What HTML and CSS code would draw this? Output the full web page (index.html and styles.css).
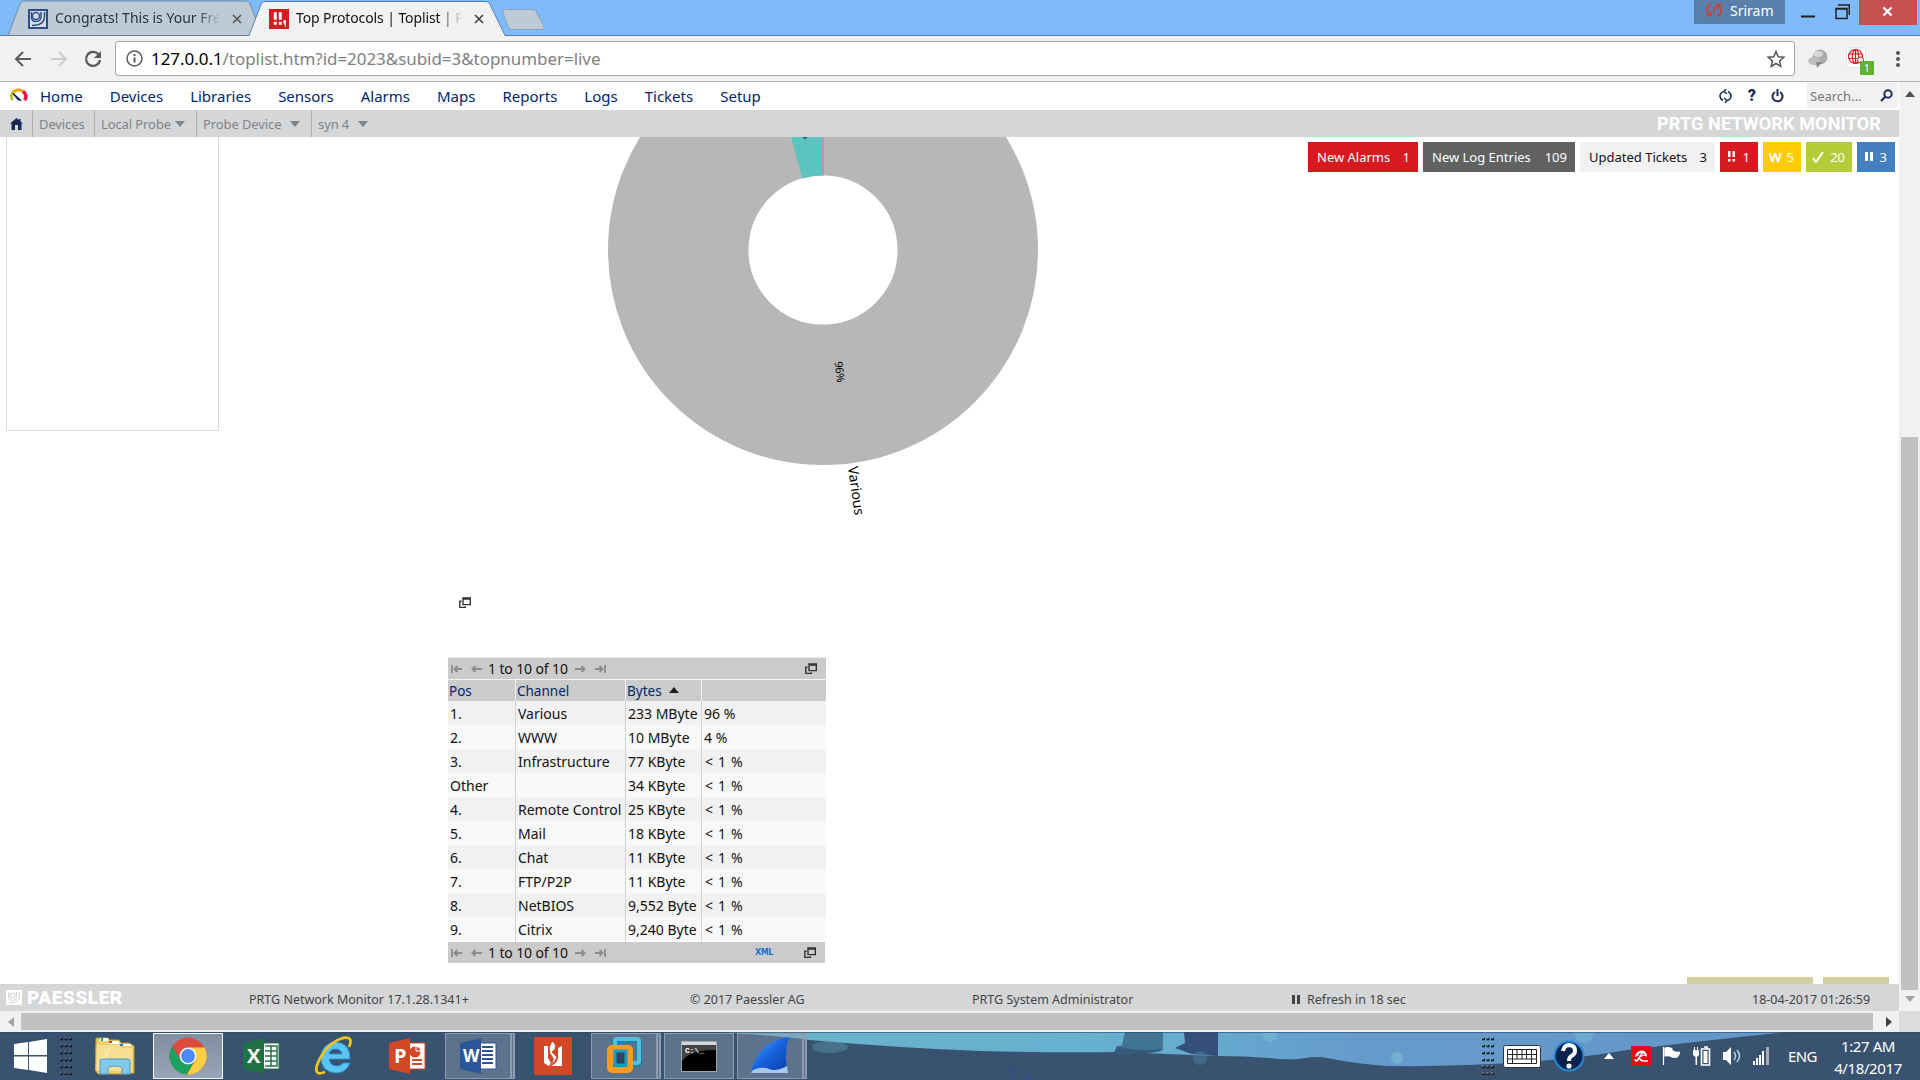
FILE: index.html
```html
<!DOCTYPE html>
<html lang="en">
<head>
<meta charset="utf-8">
<title>Top Protocols | Toplist | PRTG</title>
<link rel="stylesheet" href="styles.css">
</head>
<body>
<svg class="defs" width="0" height="0">
  <symbol id="popup" viewBox="0 0 12 12"><path d="M4 1h7.300v6.600H4zM4 2h7.300M2.600 4.200H.8v6.200h5.600V9.200" fill="none" stroke="#333" stroke-width="1.400"/></symbol>
  <symbol id="prev" viewBox="0 0 11 8"><path d="M11 4H2M4.500 1 1.500 4l3 3" fill="none" stroke="#8c8c8c" stroke-width="2"/></symbol>
  <symbol id="first" viewBox="0 0 11 8"><path d="M1 0v8M11 4H4M6.500 1 3.500 4l3 3" fill="none" stroke="#8c8c8c" stroke-width="1.800"/></symbol>
</svg>
<div class="screen">
  <header class="tabs">
    <svg class="tab-shapes" width="560" height="36">
      <path d="M8 35.500 20 4q1-3 4-3h222q3 0 4 3l8 20-7 11.500z" fill="#becbd6" stroke="#6f8ba6"/>
      <path d="M512 29.500q-3 0-4-3l-5-14q-1-3 2-3h27q3 0 4 2l8 15q1 3-2 3z" fill="#becbd6" stroke="#8ba3b9"/>
      <path d="M0 35.500h249l12-31q1-3 4-3h221q3 0 4 3l15 31h55V37H0z" fill="#f1f1f1" stroke="#587fa7"/>
    </svg>
    <div class="tab tab-one">
      <svg width="20" height="20" viewBox="0 0 20 20"><path d="M1 1h18v18H1z" fill="#d5dde8" stroke="#2d4f86" stroke-width="2"/><circle cx="8" cy="7" r="3.500" fill="none" stroke="#2d4f86" stroke-width="1.500"/><path d="M3.500 3v5q0 4.500 4.500 4.500T13 8V3M16.500 3v4q0 9.500-12.500 9.500" fill="none" stroke="#2d4f86" stroke-width="1.500"/></svg>
      <span class="tab-title">Congrats! This is Your Free</span>
      <svg width="10" height="10"><path d="m1 1 8 8m0-8-8 8" stroke="#555" stroke-width="1.600"/></svg>
    </div>
    <div class="tab tab-two">
      <svg width="20" height="20"><path d="M0 0h20v20H0z" fill="#d71920"/><path d="M5 3.500h2.500v7H5zm5 0h2.500v7H10zM5 13h2.500v2.500H5zm5 0h2.500v2.500H10zm4-.5 2.500-1.500v7" fill="#fff" stroke="#fff" stroke-width=".5"/></svg>
      <span class="tab-title">Top Protocols | Toplist | PRTG</span>
      <svg width="10" height="10"><path d="m1 1 8 8m0-8-8 8" stroke="#444" stroke-width="1.700"/></svg>
    </div>
    <div class="window-tools">
      <div class="user"><svg width="16" height="15"><path d="M5 1Q1 3 1 7q0 3 3 5.500M0 12.500h5V8M11 13.500q4-2 4-6 0-3-3-5.500M16 1.500h-5V6M8 3v5m0 1.500v2" fill="none" stroke="#d63a30" stroke-width="1.700"/></svg><span>Sriram</span></div>
      <svg class="minimise" width="14" height="24"><path d="M0 16.500h14" stroke="#222" stroke-width="2"/></svg>
      <svg class="restore" width="15" height="24"><path d="M3 5h11.300v10M1 8.500h11v10H1zM1 9h11" fill="none" stroke="#222" stroke-width="1.500"/></svg>
      <div class="close"><svg width="11" height="11"><path d="m1.500 1.500 8 8m0-8-8 8" stroke="#fff" stroke-width="2.200"/></svg></div>
    </div>
  </header>
  <div class="toolbar">
    <svg class="back" width="18" height="18"><path d="M17 9H2M9 2 2 9l7 7" fill="none" stroke="#5a5a5a" stroke-width="2"/></svg>
    <svg class="forward" width="18" height="18"><path d="M1 9h15M9 2l7 7-7 7" fill="none" stroke="#ccc" stroke-width="2"/></svg>
    <svg class="reload" width="18" height="18"><path d="M14.500 4.500A7 7 0 1 0 16 10" fill="none" stroke="#5a5a5a" stroke-width="2.200"/><path d="M17 1v7h-7z" fill="#5a5a5a"/></svg>
    <div class="address">
      <svg width="17" height="17"><circle cx="8.500" cy="8.500" r="7.500" fill="none" stroke="#5a5a5a" stroke-width="1.500"/><path d="M8.500 7.500v5M8.500 4v2" stroke="#5a5a5a" stroke-width="2"/></svg>
      <p class="url"><b>127.0.0.1</b>/toplist.htm?id=2023&amp;subid=3&amp;topnumber=live</p>
      <svg width="18" height="18" viewBox="0 0 18 18"><path d="m9 1.500 2.200 5.300 5.600.4-4.300 3.700 1.300 5.500L9 13.500l-4.800 2.900 1.300-5.500L1.200 7.200l5.600-.4z" fill="none" stroke="#555" stroke-width="1.500"/></svg>
    </div>
    <svg class="ext-one" width="20" height="20"><circle cx="12" cy="8" r="7.500" fill="#aaa"/><ellipse cx="6" cy="12" rx="6" ry="4" fill="#bdbdbd"/><path d="m8 13 1 6 5-6z" fill="#858585"/><ellipse cx="10" cy="5" rx="5" ry="3" fill="#d7d7d7"/></svg>
    <svg class="ext-two" width="28" height="28"><path d="M.5.500h19v20H.5z" fill="#fff" stroke="#e2e2e2"/><g fill="none" stroke="#d71920" stroke-width="1.200"><circle cx="9.500" cy="9.500" r="7"/><ellipse cx="9.500" cy="9.500" rx="3.200" ry="7"/><path d="M3 7h13M3 11.500h8M9.500 2.500V16"/></g><circle cx="14.500" cy="13" r="3" fill="#fff" stroke="#d71920"/><path d="M14 14h14v14H14z" fill="#5fb42d"/><text x="18" y="25" class="badge-number">1</text></svg>
    <svg class="kebab" width="6" height="18"><g fill="#555"><circle cx="3" cy="3" r="2"/><circle cx="3" cy="9" r="2"/><circle cx="3" cy="15" r="2"/></g></svg>
  </div>
  <main class="viewport">
    <div class="page">
      <nav class="menu">
        <svg width="19" height="15" viewBox="0 0 19 15"><g fill="none" stroke-width="3"><path d="M3.500 12A7 7 0 0 1 3 5.800" stroke="#b5cb35"/><path d="M3 6A7 6.500 0 0 1 14 3.500" stroke="#f7a600"/><path d="M14 3.500a7 6 0 0 1 1.500 8.500" stroke="#e5104c" stroke-width="3.600"/></g><path d="m4 5.500 8 7-3-1z" fill="#0b2265" stroke="#0b2265" stroke-width="1.200"/></svg>
        <a>Home</a><a>Devices</a><a>Libraries</a><a>Sensors</a><a>Alarms</a><a>Maps</a><a>Reports</a><a>Logs</a><a>Tickets</a><a>Setup</a>
        <div class="menu-tools">
          <svg width="13" height="14"><path d="M5 2.500Q1 3.500 1 7q0 3 3 4.500M8 11.500q4-1 4-4.500 0-3-3-4.500M7 0 5 2.500 8 5M5 9l3 2.500L6 14" fill="none" stroke="#1d2c57" stroke-width="1.500"/></svg>
          <b>?</b>
          <svg width="13" height="14"><path d="M4 3a5 5 0 1 0 5 0M6.500 0v7" fill="none" stroke="#1d2c57" stroke-width="2"/></svg>
          <div class="search"><span>Search...</span><svg width="13" height="13"><circle cx="8" cy="5" r="3.700" fill="none" stroke="#1d2c57" stroke-width="2"/><path d="m5.500 7.500-4.500 4.500" stroke="#1d2c57" stroke-width="2.200"/></svg></div>
        </div>
      </nav>
      <div class="crumbs">
        <span><svg width="13" height="12"><path d="M6.500 0 0 5.500h1.500V12h10V5.500H13L10.500 3.500V1H9v1z" fill="#1b2957"/><path d="M5 7h3v5H5z" fill="#d4d6d8"/></svg></span>
        <span>Devices</span>
        <span>Local Probe <i></i></span>
        <span>Probe Device <i></i></span>
        <span>syn 4 <i></i></span>
        <strong>PRTG NETWORK MONITOR</strong>
      </div>
      <section class="content">
        <aside class="side-box"></aside>
        <div class="report">
          <svg class="donut" width="480" height="400" viewBox="583 137 480 400">
            <circle cx="823" cy="250" r="144.750" fill="none" stroke="#b7b7b7" stroke-width="140.500"/>
            <path d="M823 137v38.500a74.500 74.500 0 0 0-20.700 3L791 137z" fill="#5bc4be"/>
            <path d="M823 137v38.500" stroke="#cd88b4" stroke-width="2"/>
            <text class="pct" transform="translate(834.500 362) rotate(82.300)" textLength="21">96%</text>
            <text transform="translate(848 467) rotate(82.300)" textLength="49">Various</text>
            <path d="M803 137q2 3 4 0" stroke="#111" fill="none"/>
          </svg>
          <svg class="popup-link" width="12" height="12"><use href="#popup"/></svg>
          <div class="toplist">
            <div class="pager"><svg width="11" height="8"><use href="#first"/></svg><svg width="11" height="8"><use href="#prev"/></svg><span>1 to 10 of 10</span><svg class="flip" width="11" height="8"><use href="#prev"/></svg><svg class="flip" width="11" height="8"><use href="#first"/></svg><svg class="window" width="12" height="12"><use href="#popup"/></svg></div>
            <div class="row head"><span>Pos</span><span>Channel</span><span>Bytes <i></i></span><span></span></div>
            <div class="row"><span>1.</span><span>Various</span><span>233 MByte</span><span>96 %</span></div>
            <div class="row"><span>2.</span><span>WWW</span><span>10 MByte</span><span>4 %</span></div>
            <div class="row"><span>3.</span><span>Infrastructure</span><span>77 KByte</span><span class="less">&lt; 1 %</span></div>
            <div class="row"><span>Other</span><span></span><span>34 KByte</span><span class="less">&lt; 1 %</span></div>
            <div class="row"><span>4.</span><span>Remote Control</span><span>25 KByte</span><span class="less">&lt; 1 %</span></div>
            <div class="row"><span>5.</span><span>Mail</span><span>18 KByte</span><span class="less">&lt; 1 %</span></div>
            <div class="row"><span>6.</span><span>Chat</span><span>11 KByte</span><span class="less">&lt; 1 %</span></div>
            <div class="row"><span>7.</span><span>FTP/P2P</span><span>11 KByte</span><span class="less">&lt; 1 %</span></div>
            <div class="row"><span>8.</span><span>NetBIOS</span><span>9,552 Byte</span><span class="less">&lt; 1 %</span></div>
            <div class="row"><span>9.</span><span>Citrix</span><span>9,240 Byte</span><span class="less">&lt; 1 %</span></div>
            <div class="pager bottom"><svg width="11" height="8"><use href="#first"/></svg><svg width="11" height="8"><use href="#prev"/></svg><span>1 to 10 of 10</span><svg class="flip" width="11" height="8"><use href="#prev"/></svg><svg class="flip" width="11" height="8"><use href="#first"/></svg><em>XML</em><svg class="window" width="12" height="12"><use href="#popup"/></svg></div>
          </div>
        </div>
        <div class="status">
          <div class="alarms"><span>New Alarms</span><span>1</span></div>
          <div class="log"><span>New Log Entries</span><span>109</span></div>
          <div class="tickets"><span>Updated Tickets</span><span>3</span></div>
          <div class="down"><svg width="9" height="11"><path d="M1 0h2.500v6H1zm4.500 0H8v6H5.500zM1 8h2.500v2.500H1zm4.500 0H8v2.500H5.500z" fill="#fff"/></svg><span>1</span></div>
          <div class="warn"><b>W</b><span>5</span></div>
          <div class="up"><svg width="12" height="12"><path d="m1 7 3 4 7-10" fill="none" stroke="#fff" stroke-width="2"/></svg><span>20</span></div>
          <div class="paused"><svg width="8" height="9"><path d="M0 0h3v9H0zm5 0h3v9H5z" fill="#fff"/></svg><span>3</span></div>
        </div>
        <div class="hidden-buttons"><span></span><span></span></div>
      </section>
      <footer class="footer">
        <span class="brand"><svg width="16" height="15"><path d="M0 0h16v15H0z" fill="#fff"/><circle cx="6.500" cy="5.500" r="2.500" fill="none" stroke="#d4d6d8" stroke-width="1.200"/><path d="M2.500 2v4q0 4.500 4 4.500t4-4.500V2M13.500 2v4q0 7-10 7" fill="none" stroke="#d4d6d8"/></svg><strong>PAESSLER</strong></span>
        <span>PRTG Network Monitor 17.1.28.1341+</span>
        <span>© 2017 Paessler AG</span>
        <span>PRTG System Administrator</span>
        <span class="refresh"><svg width="8" height="9"><path d="M0 0h3v9H0zm5 0h3v9H5z" fill="#444"/></svg>Refresh in 18 sec</span>
        <span>18-04-2017 01:26:59</span>
      </footer>
    </div>
    <div class="scroll-y">
      <svg width="10" height="6"><path d="M5 0 10 6H0z" fill="#505050"/></svg>
      <div class="thumb"></div>
      <svg width="10" height="6"><path d="M5 6 10 0H0z" fill="#a3a3a3"/></svg>
    </div>
  </main>
  <div class="scroll-x">
    <svg width="6" height="10"><path d="M0 5 6 0v10z" fill="#a3a3a3"/></svg>
    <div class="thumb"></div>
    <svg width="6" height="10"><path d="M6 5 0 0v10z" fill="#404040"/></svg>
    <div class="corner"></div>
  </div>
  <footer class="taskbar">
    <svg class="wallpaper" width="1920" height="48" viewBox="0 0 1920 48">
      <defs>
        <linearGradient id="sky"><stop offset="0" stop-color="#6ab3cb"/><stop offset=".4" stop-color="#67afd0"/><stop offset=".6" stop-color="#659bcb"/><stop offset="1" stop-color="#6496c8"/></linearGradient>
      </defs>
      <path d="M0 0h1920v48H0z" fill="#38526f"/>
      <path d="M720 0q60 4 90 8 90 8 170 11 80 2 140 1l97 4q33 0 63 3 16 1 25-1 12-2 22 0 30 6 60 8 70 1 140-4 60-5 100-12 80-10 160-18z" fill="url(#sky)"/>
      <path d="M1125 0h38v18q-18 5-49 3 2-6 8-8z" fill="#417393"/>
      <path d="M1117 14q20 6 44 3v2q-18 4-47 2z" fill="#355a7c"/>
      <path d="M1184 0h34v24l-26-2-17-6 10-5z" fill="#354f7b"/>
      <circle cx="1397" cy="26" r="6" fill="#76b5d0" opacity=".8"/><circle cx="1584" cy="1" r="10" fill="#79c5d8" opacity=".4"/><circle cx="1270" cy="3" r="7" fill="#7cc2d9" opacity=".5"/><circle cx="1200" cy="26" r="7" fill="#4c7fa0" opacity=".5"/><ellipse cx="830" cy="15" rx="18" ry="6" fill="#67b0bf" opacity=".35"/>
      <path d="m1008 35 7-2 1 15h-5zm20 7 7 6h-12z" fill="#384d83" opacity=".6"/>
      <path d="M0 .5h1920" stroke="#2b4967" opacity=".6"/>
    </svg>
    <div class="apps">
      <svg class="start" width="33" height="34"><path d="M0 5 14 3v13H0zm15-2L33 0v16H15zM0 17.500h14V31L0 29zm15 0h18V34l-18-3z" fill="#fff"/></svg>
      <svg class="dots" width="12" height="38"><path d="M0 2h12M0 9h12M0 16h12M0 23h12M0 30h12M0 37h12" stroke="#101820" stroke-width="2.500" stroke-dasharray="3 1.500"/><path d="M0 1h12M0 8h12M0 15h12M0 22h12M0 29h12M0 36h12" stroke="#75889b" stroke-dasharray="2 2.500"/></svg>
      <div class="app"><svg width="40" height="40"><path d="M1 2h12l2 2h9l2 3h8l5 3v27L33 38H3L0 34z" fill="#ead06f" stroke="#b89a3c"/><path d="M5 2h8v3H5zm9 3h10v3H14zm11 3h11v2H25z" fill="#fff"/><path d="M6 2h2v3H6z" fill="#28a34a"/><path d="M14 5h3v2h-3z" fill="#e13a20"/><path d="M25 8h3v2h-3z" fill="#2578c8"/><path d="M2 9h22l3 3h10v23H2z" fill="#f6df91"/><path d="M1 30 17 7 8 33z" fill="#fff3c0" opacity=".5"/><path d="M5 38V24q0-1 2-1h26q2 0 2 2v13h-8v-5q0-3-7-3t-7 3v5z" fill="#83c9e8" stroke="#4a9bc7"/></svg></div>
      <div class="app active"><svg width="38" height="38" viewBox="0 0 38 38"><circle cx="19" cy="19" r="18.500" fill="#de4b3d"/><path d="M3 9.700A18.500 18.500 0 0 0 18 37.500L26 23l-14 0z" fill="#1da15f"/><path d="M19 10.500h16.500A18.500 18.500 0 0 1 18 37.500L26.500 23z" fill="#ffce42"/><circle cx="19" cy="19" r="8.500" fill="#f4f4f4"/><circle cx="19" cy="19" r="6.900" fill="#4c8bf5"/></svg></div>
      <div class="app"><svg width="37" height="36"><path d="M20 5h16v26H20z" fill="#fff" stroke="#217346"/><path d="M22 8h12v20H22M22 13h12M22 18h12M22 23h12M28 8v20" fill="none" stroke="#217346" stroke-width="1.500"/><path d="m0 5 21-5v36L0 31z" fill="#1f7245"/><text x="4" y="25">X</text></svg></div>
      <div class="app"><svg width="40" height="40"><path d="M36 23H15q1 7 8 7 4 0 6-3h7q-4 10-14 10Q7 36 7 21 8 7 22 6q14 1 14 17zm-8-5q-1-5-6.500-5T15 18z" fill="#5bc5f2" stroke="#2f94cf"/><path d="M35 11q5-11-6-9Q17 5 8 19-1 34 4 37q2 1 7-1" fill="none" stroke="#f2c41d" stroke-width="2.800"/></svg></div>
      <div class="app"><svg width="37" height="36"><path d="M20 5h16v26H20z" fill="#fff" stroke="#d24726"/><path d="M23 22h10M23 26h10" stroke="#d24726" stroke-width="2"/><circle cx="26" cy="14" r="5.500" fill="#d24726"/><path d="M27 8v5h6" fill="none" stroke="#fff"/><path d="m0 5 21-5v36L0 31z" fill="#d24726"/><text x="5" y="25">P</text></svg></div>
      <div class="app open stacked"><svg width="37" height="36"><path d="M20 5h16v26H20z" fill="#fff" stroke="#2b579a"/><path d="M22 9h11M22 13h11M22 17h11M22 21h11M22 25h11" stroke="#2b579a" stroke-width="2"/><path d="m0 5 21-5v36L0 31z" fill="#2b579a"/><text class="word" x="3" y="24">W</text></svg></div>
      <div class="app"><svg width="38" height="38"><path d="M0 0h38v38H0z" fill="#d24726"/><path d="M10 9h4v12l3 5-2 3-5-3zM24 11l4-2v20H17q7-3 7-9z" fill="#fff"/><path d="m15 11 3-7q5 3 3 8-1 2-3 3l5 5q-1 5-7 8 4-5 3-7-4-4-4-10z" fill="#fff" stroke="#d24726"/></svg></div>
      <div class="app open stacked"><svg width="36" height="38"><rect x="9" y="3" width="24" height="24" rx="2" fill="none" stroke="#1587a8" stroke-width="6"/><rect x="9" y="2" width="24" height="24" rx="2" fill="none" stroke="#58bdda" stroke-width="4"/><rect x="4" y="11" width="20" height="22" rx="2" fill="none" stroke="#f59b21" stroke-width="6"/><path d="M9 14h11v14H9z" fill="#2c4660" stroke="#1a9ac0" stroke-width="3"/></svg></div>
      <div class="app open"><svg width="36" height="31"><path d="M.5.500h35v30H.5z" fill="#000" stroke="#a6a6a6"/><path d="M1 1h34v3H1z" fill="#d7d7d7"/><path d="M1 4h34v5Q10 8 1 20z" fill="#444"/><text class="prompt" x="4" y="12">C:\_</text></svg></div>
      <div class="app open stacked"><svg width="38" height="38"><defs><linearGradient id="fin" x2="1" y2="1"><stop stop-color="#5ab0ff"/><stop offset=".5" stop-color="#1562dc"/><stop offset="1" stop-color="#0a3a9e"/></linearGradient></defs><path d="M0 36Q6 4 38 0q-6 17-1 36z" fill="url(#fin)"/><path d="M2 33q9-4 16-1t18-3l1 7H0z" fill="#a9c8ef"/></svg></div>
    </div>
    <div class="tray">
      <svg class="dots" width="12" height="38"><path d="M0 2h12M0 9h12M0 16h12M0 23h12M0 30h12M0 37h12" stroke="#101820" stroke-width="2.500" stroke-dasharray="3 1.500"/><path d="M0 1h12M0 8h12M0 15h12M0 22h12M0 29h12M0 36h12" stroke="#a5b8cb" stroke-dasharray="2 2.500"/></svg>
      <svg class="keys" width="38" height="23"><rect x=".5" y=".5" width="37" height="22" rx="2" fill="#fff" stroke="#333"/><path d="M4.500 4.500h29v14h-29zM4.500 9.500h29M4.500 14h29M9.500 4.500v14M14 4.500V14M19 4.500V14M23.500 4.500V14M28.500 4.500v14" fill="none" stroke="#222"/></svg>
      <svg class="help" width="32" height="32"><circle cx="16" cy="16" r="14.500" fill="#08224e" stroke="#258bd7" stroke-width="2"/><path d="M10 11q1-6 6.500-6 6 1 5.500 6 0 3-3.500 5-2.500 1-2.500 5" fill="none" stroke="#fff" stroke-width="4"/><circle cx="16" cy="26" r="2.600" fill="#fff"/></svg>
      <svg class="more" width="10" height="6"><path d="m5 0 5 6H0z" fill="#fff"/></svg>
      <svg class="avira" width="20" height="20"><path d="M0 0h20v20H0z" fill="#e20a17"/><path d="M4 11q1-6 7-6.500 5 .5 5 6.500-3-2.500-6 0-3-2-6 0z" fill="#fff"/><path d="M6 10q2-3 5-3 3 1 3 2-3-1-4 1-2-1-4 0z" fill="#e20a17"/><path d="m12 6-6 9q-2 0-2-2m4-2q1 4 5 4h4" fill="none" stroke="#fff" stroke-width="1.500"/></svg>
      <svg class="flag" width="18" height="20"><path d="M1.500 1v18M3 2q4-1 7 1v8q-3-2-7-1zM11 5q3 2 7 1-2 5-3 5-3 1-5-1z" fill="#fff" stroke="#fff" stroke-width="1.200"/></svg>
      <svg class="battery" width="18" height="20"><path d="M8.500 3h8v16h-8zM11 1h3v2" fill="none" stroke="#fff" stroke-width="1.600"/><path d="M10.500 5h4v12h-4zM0 4h6v5L4 11v8H2.500v-8L0 9zM1 1v3M5 1v3" fill="#fff"/><path d="M1.500 1v3M4.500 1v3" stroke="#fff"/></svg>
      <svg class="sound" width="19" height="20"><path d="M1 6h3l5-5v18l-5-5H1z" fill="#fff"/><path d="M12 6q3 4 0 8M15 4q5 6 0 12" fill="none" stroke="#bdd0e4" stroke-width="1.500"/></svg>
      <svg class="signal" width="16" height="18"><path d="M0 14h2v4H0zm3-3h2v7H3zm3-3h2v10H6zm3-4h2v14H9z" fill="#fff"/><path d="M13 0h3v18h-3z" fill="#aaa"/></svg>
      <span class="lang">ENG</span>
      <div class="clock"><span>1:27 AM</span><span>4/18/2017</span></div>
    </div>
  </footer>
</div>
</body>
</html>
```
FILE: styles.css
```css
* { box-sizing: border-box; }
body { margin: 0; font-family: "Noto Sans", "Open Sans", sans-serif; font-size: 14px; color: #111; overflow: hidden; }
svg { display: block; flex: none; }
p { margin: 0; }
span { white-space: nowrap; }
.defs { position: absolute; }
.screen { width: 1920px; height: 1080px; display: flex; flex-direction: column; overflow: hidden; background: #fff; }

/* Browser tabs */
.tabs { position: relative; height: 36px; background: #7fbbfa; border-bottom: 1px solid #4f80b3; display: flex; flex: none; }
.tab-shapes { position: absolute; left: 0; top: 0; }
.tab { position: relative; display: flex; align-items: center; height: 38px; }
.tab-one { margin-left: 28px; width: 214px; }
.tab-two { margin-left: 27px; width: 216px; }
.tab-title { width: 168px; margin: 0 10px 0 7px; overflow: hidden; letter-spacing: -.1px; line-height: 18px; padding-bottom: 2px; mask-image: linear-gradient(90deg, #000 85%, transparent 99%); }
.tab-one .tab-title { color: #27323c; letter-spacing: 0; }
.window-tools { margin-left: auto; display: flex; width: 226px; }
.user { display: flex; align-items: center; gap: 8px; width: 91px; height: 24px; padding: 0 0 3px 12px; background: #577fa9; color: #fff; }
.minimise { margin-left: 16px; }
.restore { margin-left: 20px; }
.close { margin-left: 9px; width: 58px; height: 25px; padding: 0 2px 2px 0; background: #c75050; display: flex; align-items: center; justify-content: center; }

/* Address bar */
.toolbar { flex: none; height: 46px; display: flex; align-items: center; background: #f1f1f1; border-bottom: 1px solid #b3b3b3; }
.back { margin-left: 14px; }
.forward { margin-left: 18px; }
.reload { margin-left: 16px; }
.address { width: 1680px; height: 35px; margin-left: 13px; padding: 0 9px 0 10px; background: #fff; border: 1px solid #a5a5a5; border-radius: 3px; display: flex; align-items: center; }
.url { flex: 1; margin-left: 8px; font-size: 17px; letter-spacing: -.05px; color: #7f7f7f; }
.url b { font-weight: 400; color: #000; }
.ext-one { margin-left: 13px; }
.ext-two { margin: 4px 0 0 18px; }
.kebab { margin-left: 21px; }
.badge-number { font-size: 10px; fill: #fff; }

/* Page and main menu */
.viewport { flex: none; height: 929px; display: flex; }
.page { width: 1899px; display: flex; flex-direction: column; }
.menu { height: 28px; display: flex; align-items: center; padding: 0 0 1px 9px; color: #00286b; font-size: 15px; }
.menu a { margin-left: 27px; letter-spacing: 0; }
.menu a:first-of-type { margin-left: 12px; }
.menu-tools { margin-left: auto; display: flex; align-items: center; }
.menu-tools b { margin: 0 15px 0 16px; font-family: Roboto, sans-serif; font-size: 16px; font-weight: 900; color: #1d2c57; }
.search { width: 91px; height: 25px; margin: 0 1px 0 23px; padding: 0 5px 0 3px; background: #f1f1f1; display: flex; align-items: center; justify-content: space-between; color: #777; font-size: 13px; }
.crumbs { height: 27px; display: flex; align-items: center; background: #d4d6d8; color: #818487; font-size: 13px; }
.crumbs span { height: 27px; display: flex; align-items: center; padding-left: 6px; border-right: 1px solid #acaeb0; letter-spacing: -.1px; }
.crumbs span:nth-child(1) { width: 33px; padding-left: 10px; }
.crumbs span:nth-child(2) { width: 62px; }
.crumbs span:nth-child(3) { width: 102px; }
.crumbs span:nth-child(4) { width: 115px; }
.crumbs span:nth-child(5) { border: 0; }
.crumbs i { margin-left: 4px; border: 5px solid transparent; border-top: 6px solid #818487; border-bottom: 0; }
.crumbs span:nth-child(n+4) i { margin-left: 9px; }
.crumbs strong { margin-left: auto; margin-right: 18px; font-family: Roboto, sans-serif; font-size: 18px; letter-spacing: .15px; color: #fff; }

/* Toplist report */
.content { position: relative; height: 847px; display: flex; overflow: hidden; }
.side-box { flex: none; width: 213px; height: 294px; margin-left: 6px; border: 1px solid #dadada; border-top: 0; }
.report { margin-left: 229px; width: 620px; display: flex; flex-direction: column; align-items: flex-start; }
.donut { margin-left: 135px; font-size: 14px; }
.pct { font-size: 11px; }
.popup-link { margin: 60px 0 0 11px; }
.toplist { width: 378px; margin-top: 48px; display: flex; flex-direction: column; border-top: 1px solid #ececec; }
.pager { height: 22px; display: flex; align-items: center; padding: 0 9px 0 3px; background: #cbcbcb; border-bottom: 1px solid #f3f3f3; }
.pager svg + svg { margin-left: 9px; }
.pager .flip { transform: scaleX(-1); }
.pager span { margin: 0 6px; width: 81px; letter-spacing: -.12px; }
.pager .window, .pager svg + .window { margin-left: auto; }
.pager em { margin-left: 149px; color: #1b75cf; font: 700 8px "DejaVu Sans", sans-serif; letter-spacing: -.4px; }
.bottom { border: 0; width: 377px; margin-top: 1px; height: 21px; }
.row { display: grid; grid-template-columns: 68px 110px 76px 124px; height: 24px; background: #f1f1f1; }
.row:nth-child(even) { background: #f8f8f8; }
.row:nth-child(odd) { background: #f1f1f1; }
.row span { line-height: 25px; padding-left: 2px; border-right: 1px solid #d2d2d2; }
.row span:nth-child(4) { border: 0; }
.row .less { padding-left: 3px; word-spacing: 1.300px; }
.row.head { height: 21px; background: #cbcbcb; color: #00286b; font-size: 13.500px; }
.head span { line-height: 22px; border-color: #f3f3f3; padding-left: 1px; }
.head i { display: inline-block; margin: 0 0 3px 4px; border: 5px solid transparent; border-bottom: 6px solid #222; border-top: 0; }
.status { position: absolute; right: 4px; top: 5px; display: flex; gap: 5px; font-size: 13px; color: #fff; }
.status div { height: 30px; padding: 0 8px 1px 9px; display: flex; align-items: center; justify-content: space-between; }
.status .alarms { width: 110px; background: #d71920; }
.status .log { width: 152px; background: #5f6261; }
.status .tickets { width: 135px; background: #f1f1f1; color: #111; }
.status .down { width: 38px; padding-left: 7px; background: #d71920; }
.status .warn { width: 38px; padding: 0 7px 1px 6px; background: #ffcb05; }
.status .up { width: 46px; padding: 0 7px 1px 6px; background: #b4cc38; }
.status .paused { width: 38px; padding-left: 8px; background: #447fc1; }
.hidden-buttons { position: absolute; right: 10px; bottom: 0; height: 7px; display: flex; gap: 10px; }
.hidden-buttons span { width: 126px; background: #d5cea2; }
.hidden-buttons span + span { width: 66px; }
.footer { height: 27px; display: grid; grid-template-columns: 243px 441px 282px 320px 460px 1fr; align-items: center; padding: 4px 0 0 6px; background: #d4d6d8; color: #444; font-size: 12.500px; }
.brand { display: flex; align-items: center; gap: 5px; margin-top: -4px; color: #fff; }
.brand strong { font: 900 19px/22px Roboto, sans-serif; letter-spacing: .55px; }
.refresh { display: flex; align-items: center; gap: 7px; }

/* Scrollbars */
.scroll-y { width: 21px; background: #f1f1f1; display: flex; flex-direction: column; align-items: center; padding-top: 9px; }
.scroll-y .thumb { width: 17px; height: 553px; margin: 340px 0 6px; background: #c1c1c1; }
.scroll-x { flex: none; height: 21px; background: #f1f1f1; display: flex; align-items: center; padding-left: 8px; }
.scroll-x .thumb { width: 1852px; height: 17px; margin: 0 13px 0 7px; background: #c1c1c1; }
.corner { margin-left: auto; width: 21px; height: 21px; background: #dcdcdc; }

/* Taskbar */
.taskbar { position: relative; flex: none; height: 48px; display: flex; justify-content: space-between; color: #fff; overflow: hidden; }
.wallpaper { position: absolute; left: 0; top: 0; }
.apps, .tray { position: relative; display: flex; align-items: center; height: 48px; }
.start { margin-left: 14px; }
.dots { margin-left: 13px; }
.app { width: 70px; height: 46px; margin-right: 3px; display: flex; align-items: center; justify-content: center; border: 1px solid transparent; }
.dots + .app { margin-left: 8px; }
.app.active { background: linear-gradient(#7f8ea0, #97a5b6); border: 1px solid #f4f6f8; }
.app.open { background: rgba(145, 160, 180, .42); border: 1px solid #8d9caf; }
.app.stacked { border-right: 5px double #8d9caf; }
.app text { font: 700 20px "Open Sans", sans-serif; fill: #fff; }
.app .word { font-size: 17px; }
.app .prompt { font: 700 8px "Liberation Mono", monospace; }
.tray { width: 438px; }
.tray .dots { margin-left: 0; }
.keys { margin-left: 9px; }
.help { margin-left: 12px; }
.more { margin-left: 19px; }
.avira { margin-left: 17px; }
.flag { margin-left: 11px; }
.battery { margin-left: 13px; }
.sound { margin-left: 11px; }
.signal { margin-left: 12px; }
.lang { margin-left: 19px; font-size: 15px; letter-spacing: -.6px; }
.clock { margin-left: auto; width: 84px; margin-right: 10px; padding-top: 2px; display: flex; flex-direction: column; text-align: center; font-size: 15px; line-height: 22px; letter-spacing: -.4px; }
```
